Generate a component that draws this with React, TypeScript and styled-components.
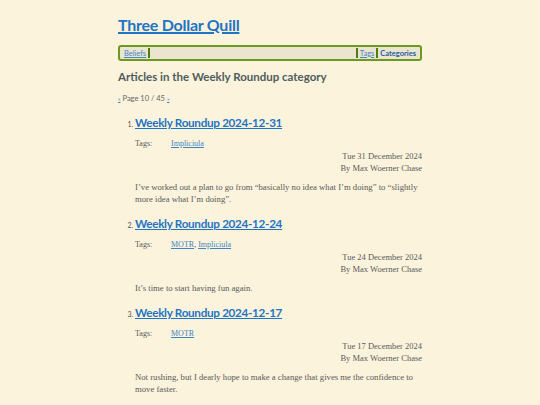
import React from 'react';
import styled, { createGlobalStyle } from 'styled-components';

const Global = createGlobalStyle`
  html, body { margin: 0; padding: 0; background: #fbf3dc; }
  #root { min-height: 405px; }
`;

const sans = `"Lato", "Noto Sans", sans-serif`;

const Page = styled.div`
  width: 304px;
  margin: 0 auto;
  padding-top: 14px;
  font-family: "Liberation Serif", "DejaVu Serif", serif;
  color: #5a5a5a;
`;

const SiteTitle = styled.h1`
  margin: 0;
  font-family: ${sans};
  font-weight: 700;
  font-size: 16px;
  letter-spacing: -0.25px;
  line-height: 22px;
  a { color: #1f74c4; text-decoration: underline; text-decoration-thickness: 1.5px; }
`;

const Nav = styled.nav`
  margin-top: 9px;
  height: 12px;
  border: 2px solid #6b9a23;
  border-radius: 3px;
  background: #ebe4cf;
  display: flex;
  align-items: center;
  padding: 0 2px;
  font-family: ${sans};
  font-size: 7.5px;
`;

const NavLink = styled.a<{ $bold?: boolean }>`
  color: ${p => (p.$bold ? '#1d5e9e' : '#3d85c6')};
  font-weight: ${p => (p.$bold ? 700 : 400)};
  text-decoration: ${p => (p.$bold ? 'none' : 'underline')};
  padding: 0 2px;
`;

const Sep = styled.span`
  width: 2px;
  height: 10px;
  background: #4f7d14;
`;

const Spacer = styled.div`
  flex: 1;
`;

const Heading = styled.h2`
  margin: 8px 0 0;
  font-family: ${sans};
  font-weight: 700;
  font-size: 11.5px;
  line-height: 16px;
  color: #4f5d5d;
`;

const Pager = styled.div`
  margin-top: 9px;
  font-family: ${sans};
  font-size: 7.5px;
  line-height: 10px;
  color: #666;
  a { color: #3d85c6; font-size: 6px; }
`;

const List = styled.ol`
  margin: 10px 0 0;
  padding-left: 17px;
  li::marker {
    font-family: ${sans};
    font-size: 7px;
    color: #555;
  }
`;

const Item = styled.li`
  margin-bottom: 10px;
`;

const ItemTitle = styled.h3`
  margin: 0;
  font-family: ${sans};
  font-weight: 700;
  font-size: 11.7px;
  letter-spacing: -0.3px;
  line-height: 16px;
  a { color: #1f74c4; text-decoration: underline; text-decoration-thickness: 1.2px; }
`;

const TagsRow = styled.div`
  margin-top: 8px;
  display: flex;
  font-size: 8px;
  line-height: 12px;
`;

const TagsLabel = styled.span`
  width: 36px;
`;

const TagLink = styled.a`
  color: #3d85c6;
  text-decoration: underline;
`;

const Meta = styled.div`
  text-align: right;
  font-size: 8.5px;
  line-height: 12px;
`;

const Summary = styled.p`
  margin: 7px 0 0;
  font-size: 8.7px;
  line-height: 12px;
`;

type Article = { title: string; tags: string[]; date: string; summary: string };

const articles: Article[] = [
  {
    title: 'Weekly Roundup 2024-12-31',
    tags: ['Impliciula'],
    date: 'Tue 31 December 2024',
    summary: 'I\u2019ve worked out a plan to go from \u201cbasically no idea what I\u2019m doing\u201d to \u201cslightly more idea what I\u2019m doing\u201d.',
  },
  {
    title: 'Weekly Roundup 2024-12-24',
    tags: ['MOTR', 'Impliciula'],
    date: 'Tue 24 December 2024',
    summary: 'It\u2019s time to start having fun again.',
  },
  {
    title: 'Weekly Roundup 2024-12-17',
    tags: ['MOTR'],
    date: 'Tue 17 December 2024',
    summary: 'Not rushing, but I dearly hope to make a change that gives me the confidence to move faster.',
  },
];

export default function App() {
  return (
    <>
      <Global />
      <Page>
        <SiteTitle><a href="#">Three Dollar Quill</a></SiteTitle>
        <Nav>
          <NavLink href="#">Beliefs</NavLink>
          <Sep />
          <Spacer />
          <Sep />
          <NavLink href="#">Tags</NavLink>
          <Sep />
          <NavLink href="#" $bold>Categories</NavLink>
        </Nav>
        <Heading>Articles in the Weekly Roundup category</Heading>
        <Pager><a href="#">«</a> Page 10 / 45 <a href="#">»</a></Pager>
        <List>
          {articles.map(a => (
            <Item key={a.title}>
              <ItemTitle><a href="#">{a.title}</a></ItemTitle>
              <TagsRow>
                <TagsLabel>Tags:</TagsLabel>
                <span>
                  {a.tags.map((t, i) => (
                    <React.Fragment key={t}>
                      {i > 0 && ', '}
                      <TagLink href="#">{t}</TagLink>
                    </React.Fragment>
                  ))}
                </span>
              </TagsRow>
              <Meta>
                <div>{a.date}</div>
                <div>By Max Woerner Chase</div>
              </Meta>
              <Summary>{a.summary}</Summary>
            </Item>
          ))}
        </List>
      </Page>
    </>
  );
}
